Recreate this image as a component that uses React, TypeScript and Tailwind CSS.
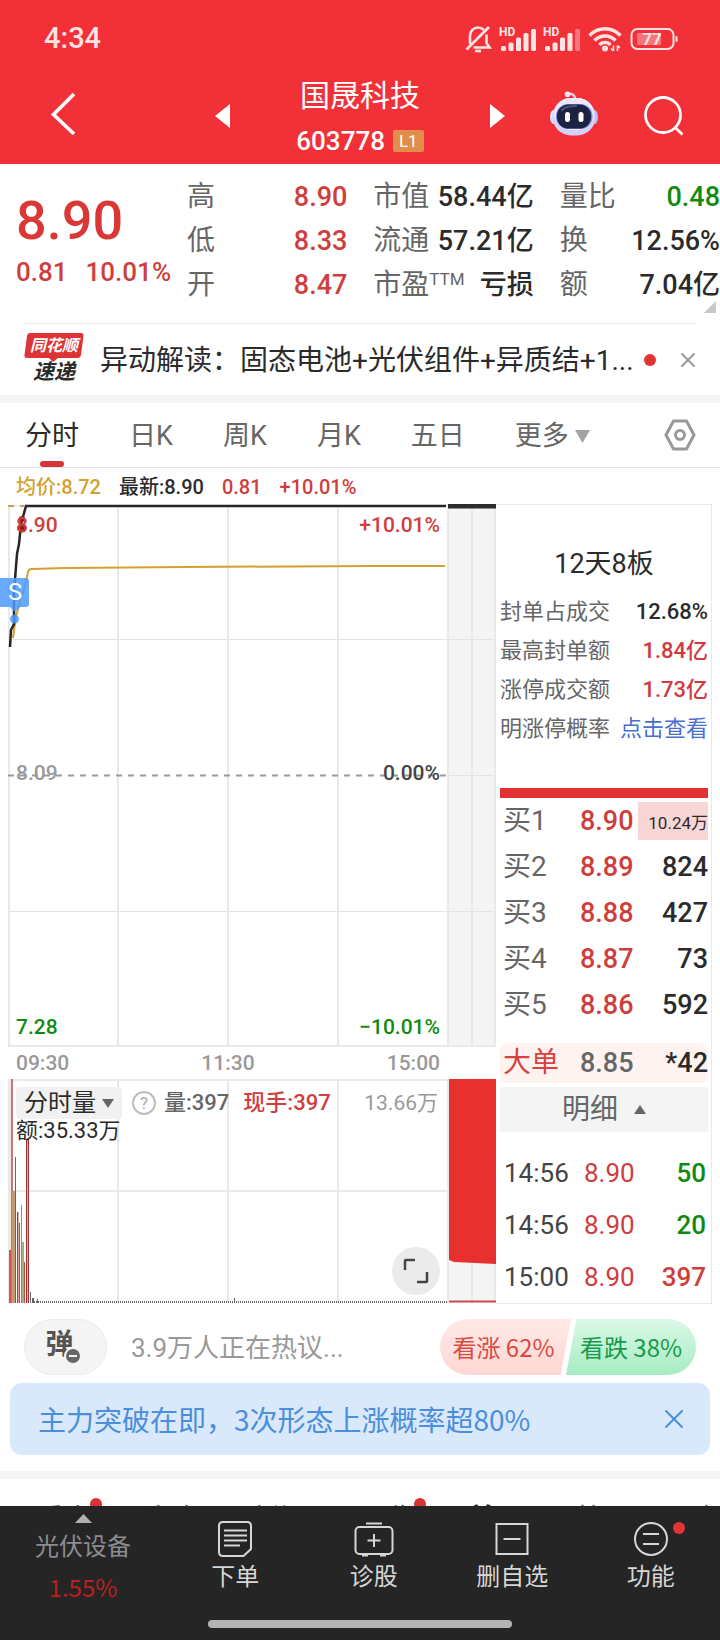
import { useState } from 'react'
import { X } from 'lucide-react'

const stats = [
  [
    { label: '高', value: '8.90', color: 'text-[#cf3d3c]' },
    { label: '低', value: '8.33', color: 'text-[#cf3d3c]' },
    { label: '开', value: '8.47', color: 'text-[#cf3d3c]' },
  ],
  [
    { label: '市值', value: '58.44亿', color: 'text-[#2b2b2b]' },
    { label: '流通', value: '57.21亿', color: 'text-[#2b2b2b]' },
    { label: '市盈', sup: 'TTM', value: '亏损', color: 'text-[#2b2b2b]' },
  ],
  [
    { label: '量比', value: '0.48', color: 'text-[#118a11]' },
    { label: '换', value: '12.56%', color: 'text-[#2b2b2b]' },
    { label: '额', value: '7.04亿', color: 'text-[#2b2b2b]' },
  ],
]

const periods = ['分时', '日K', '周K', '月K', '五日']

const bids = [
  { label: '买1', price: '8.90', volume: '10.24万' },
  { label: '买2', price: '8.89', volume: '824' },
  { label: '买3', price: '8.88', volume: '427' },
  { label: '买4', price: '8.87', volume: '73' },
  { label: '买5', price: '8.86', volume: '592' },
]

const trades = [
  { time: '14:56', price: '8.90', volume: '50', color: 'text-[#118a11]' },
  { time: '14:56', price: '8.90', volume: '20', color: 'text-[#118a11]' },
  { time: '15:00', price: '8.90', volume: '397', color: 'text-[#cf3d3c]' },
]

const limitInfo = [
  { label: '封单占成交', value: '12.68%', color: 'text-[#2b2b2b]' },
  { label: '最高封单额', value: '1.84亿', color: 'text-[#d0393f]' },
  { label: '涨停成交额', value: '1.73亿', color: 'text-[#d0393f]' },
]

// x, top, width, colour
const volumeBars: [number, number, number, string][] = [
  [1, 0, 3, '#f6e4e4'],
  [1, 171, 2, '#d9504f'],
  [3, 0, 2, '#c07a78'],
  [4, 112, 4, '#c29a72'],
  [7, 78, 1, '#a84a48'],
  [9, 133, 1, '#b03c3a'],
  [10, 133, 1, '#e2a5a3'],
  [11, 144, 1, '#d24341'],
  [13, 126, 1, '#dd6e6c'],
  [14, 163, 2, '#9bb27c'],
  [16, 183, 1, '#d24341'],
  [18, 60, 1, '#983230'],
  [19, 60, 1, '#e2a5a3'],
  [20, 60, 1, '#983230'],
  [22, 213, 1, '#666666'],
  [24, 219, 2, '#666666'],
  [29, 220, 1, '#666666'],
  [226, 219, 1, '#666666'],
]

const newsTabs = [
  { label: '看点', dot: true },
  { label: '资金', dot: false },
  { label: '新闻', dot: false },
  { label: '公告', dot: true },
  { label: '首页', dot: false, active: true },
  { label: '简况', dot: false },
  { label: '财务', dot: false },
]

function StatusBar() {
  return (
    <div className="flex h-[68px] items-center justify-between pt-2.5 pr-[42px] pl-11 text-[#ffe3e4]">
      <span className="text-[29px] font-medium">4:34</span>
      <div className="flex items-center gap-2">
        <svg width="27" height="28" viewBox="0 0 27 28" fill="none" stroke="currentColor" strokeWidth="2.6">
          <path d="M1.5 24.5 24 2" />
          <path d="M5 19V11c0-5 3.500-8.500 8-8.500 2.500 0 4.500 1 6 2.500M21.500 9.500V18l3 4.500H8.500" />
          <path d="M10 26h6" strokeWidth="2.600" />
        </svg>
        <Signal />
        <Signal weak />
        <svg width="34" height="26" viewBox="0 0 34 26" fill="none" stroke="currentColor" strokeWidth="3.400">
          <path d="M1.500 9.500c9-9 22-9 31 0" />
          <path d="M6.500 14.500c6-6 15-6 21 0" />
          <path d="M11.500 19c3-3.500 8-3.500 11 0" />
          <circle cx="17" cy="22.500" r="3" fill="currentColor" stroke="none" />
          <path d="M25.500 19.500v5.500m0 0-2.500-2.500M29.500 25v-5.500m0 0 2.500 2.500" strokeWidth="1.600" />
        </svg>
        <svg width="48" height="24" viewBox="0 0 48 24" fill="none">
          <rect x="1.500" y="2" width="42" height="20" rx="6" stroke="currentColor" strokeWidth="2" />
          <rect x="7" y="6" width="24" height="12" rx="1" fill="#f8747a" />
          <rect x="45.500" y="9" width="2" height="6" rx="1" fill="currentColor" />
          <text x="22" y="17.500" textAnchor="middle" fill="currentColor" fontSize="17" fontWeight="700">77</text>
        </svg>
      </div>
    </div>
  )
}

function Signal({ weak = false }: { weak?: boolean }) {
  return (
    <svg className="overflow-visible" width="36" height="25" viewBox="0 0 36 25" fill="currentColor">
      <text x="-1" y="9" fontSize="12" fontWeight="700">HD</text>
      <rect x="1" y="19" width="5" height="5" rx="1.500" />
      <rect x="8.500" y="15.500" width="5" height="8.500" rx="1.500" />
      <rect x="16" y="10.500" width="5" height="13.500" rx="1.500" />
      <rect x="23.500" y="6" width="5" height="18" rx="1.500" />
      <rect x="31" y="2" width="5" height="22" rx="1.500" opacity={weak ? 0.4 : 1} />
    </svg>
  )
}

function Robot() {
  return (
    <svg width="48" height="46" viewBox="0 0 48 46" fill="none">
      <path d="M17 3c5-1 8 1 8 5" stroke="#f3c9dc" strokeWidth="2.400" />
      <circle cx="17.500" cy="3.200" r="2.800" fill="#f6e6f2" />
      <ellipse cx="3.500" cy="26" rx="3.500" ry="7" fill="#dfe0fb" />
      <ellipse cx="44.500" cy="26" rx="3.500" ry="7" fill="#b9bdf0" />
      <rect x="2.500" y="7" width="43" height="37.500" rx="18.500" fill="#d5d2f7" />
      <rect x="4" y="7" width="40" height="32" rx="16" fill="#ece8fc" />
      <rect x="6" y="13" width="36.500" height="25" rx="12" fill="#7a86e0" />
      <rect x="7" y="13.500" width="34" height="24" rx="11.500" fill="#1b2340" />
      <path d="M12 19c3-3.500 8-4 14-4" stroke="#4c5578" strokeWidth="2" strokeLinecap="round" />
      <rect x="15" y="21" width="5" height="10" rx="2.500" fill="#fff" />
      <rect x="28.500" y="21" width="5" height="10" rx="2.500" fill="#fff" />
    </svg>
  )
}

function Header() {
  return (
    <header className="bg-[#f23038]">
      <StatusBar />
      <div className="grid h-24 grid-cols-[1fr_auto_1fr] items-center">
        <button aria-label="返回" className="mb-1 ml-[50px] w-fit">
          <svg width="26" height="44" viewBox="0 0 26 44" fill="none" stroke="#fff" strokeWidth="3.600">
            <path d="M24 2 3.500 22.500 24 42" />
          </svg>
        </button>
        <div className="flex w-[290px] items-center justify-between">
          <button aria-label="上一只">
            <svg width="15" height="24" viewBox="0 0 15 24" fill="#fff"><path d="M0 12 15 0v24z" /></svg>
          </button>
          <div className="pt-1 text-center text-white">
            <h1 className="text-[30px] leading-[46px]">国晟科技</h1>
            <p className="flex items-center justify-center gap-2 text-[26px] leading-[44px] font-medium">
              603778
              <span className="rounded-xs bg-[#df8f4b] px-1.5 text-[17px] leading-[22px] font-normal">L1</span>
            </p>
          </div>
          <button aria-label="下一只">
            <svg width="15" height="24" viewBox="0 0 15 24" fill="#fff"><path d="M15 12 0 0v24z" /></svg>
          </button>
        </div>
        <div className="flex items-center justify-end gap-[46px] pr-9">
          <button aria-label="助手" className="mb-1"><Robot /></button>
          <button aria-label="搜索">
            <svg width="40" height="40" viewBox="0 0 40 40" fill="none" stroke="#fff" strokeWidth="2.800">
              <circle cx="19" cy="19" r="17.500" />
              <path d="m30.500 31 8 7.500" />
            </svg>
          </button>
        </div>
      </div>
    </header>
  )
}

function Quote() {
  return (
    <section className="relative flex pt-[11px] pb-4 pl-4">
      <div className="w-[171px] pt-3 text-[#cf3d3c]">
        <p className="text-[54px] leading-[68px] font-medium text-[#d93837]">8.90</p>
        <p className="flex gap-[18px] text-[26px] leading-[34px] font-medium">
          <span>0.81</span>
          <span>10.01%</span>
        </p>
      </div>
      <div className="grid flex-1 grid-cols-3 gap-[26px]">
        {stats.map((column, i) => (
          <dl key={i}>
            {column.map((item) => (
              <div key={item.label} className="flex justify-between text-[28px] leading-[44px] whitespace-nowrap">
                <dt className="flex text-[#666]">
                  {item.label}
                  {item.sup && <sup className="top-0 text-[17px] leading-8">{item.sup}</sup>}
                </dt>
                <dd className={`text-[27px] font-medium ${item.color}`}>{item.value}</dd>
              </div>
            ))}
          </dl>
        ))}
      </div>
      <svg className="absolute right-1 bottom-2.5" width="12" height="12" viewBox="0 0 12 12" fill="#c8c8c8">
        <path d="M12 0v12H0z" />
      </svg>
    </section>
  )
}

function NewsFlash() {
  return (
    <section className="mx-6 flex h-[72px] items-center border-t border-[#e8e8e8]">
      <div className="relative w-[60px] pt-px font-bold italic">
        <svg className="absolute top-0 left-0" width="60" height="30" viewBox="0 0 60 30" fill="#dd3436">
          <path d="M6 0h51q3 0 2.500 3L57 22q-.500 3-3.500 3H34l-5 4-4-4H3q-3 0-2.500-3L3 3q.500-3 3-3z" />
        </svg>
        <p className="relative text-center text-[16px] leading-6 text-white">同花顺</p>
        <p className="text-center text-[21px] leading-7 text-[#2b2b2b]">速递</p>
      </div>
      <p className="ml-4 flex-1 truncate pt-0.5 text-[28px] leading-10 text-[#2b2b2b]">
        异动解读：固态电池+光伏组件+异质结+1...
      </p>
      <span className="size-3 rounded-full bg-[#e33434]" />
      <button aria-label="关闭" className="-mr-1 ml-5">
        <X size={24} strokeWidth={2} className="text-[#999]" />
      </button>
    </section>
  )
}

function PeriodTabs({ period, onChange }: { period: string; onChange: (p: string) => void }) {
  return (
    <nav className="flex h-[65px] items-center gap-[50px] border-b border-[#e3e3e3] pr-6 pl-[25px] text-[27px]">
      {periods.map((p) => (
        <button
          key={p}
          onClick={() => onChange(p)}
          className={`relative h-full pt-0.5 whitespace-nowrap ${p === period ? 'text-[#2b2b2b]' : 'text-[#666]'}`}
        >
          {p}
          {p === period && (
            <span className="absolute bottom-0 left-1/2 h-1.5 w-6 -translate-x-1/2 rounded-full bg-[#d93335]" />
          )}
        </button>
      ))}
      <button className="flex items-center gap-1.5 pt-0.5 whitespace-nowrap text-[#666]">
        更多
        <svg width="15" height="13" viewBox="0 0 15 13" fill="#a3a3a3"><path d="M0 0h15L7.500 13z" /></svg>
      </button>
      <button aria-label="设置" className="ml-auto">
        <svg width="32" height="32" viewBox="0 0 32 32" fill="none" stroke="#999" strokeWidth="3">
          <path d="M9.500 2h13L30 16l-7.500 14h-13L2 16z" strokeLinejoin="round" />
          <circle cx="16" cy="16" r="4.500" />
        </svg>
      </button>
    </nav>
  )
}

function PriceChart() {
  return (
    <div className="relative h-[543px] text-[21px] leading-6 font-medium">
      <svg className="block size-full" viewBox="0 0 488 543" preserveAspectRatio="none" fill="none">
        <rect x="440" y="0" width="48" height="543" fill="#f4f4f4" />
        <path d="M.500 2H440M0 135.500h488M0 407.500h488M440 271.500h48" stroke="#e3e3e3" />
        <path d="M1 2v541M110 2v541M220 2v541M330 2v541M440 2v541M464 2v541M487 2v541M0 542h488" stroke="#e9e9e9" strokeWidth="2" />
        <path d="M0 271.500h440" stroke="#999" strokeWidth="2" strokeDasharray="6 6" />
        <path d="M0 2h16" stroke="#c9a257" strokeWidth="2" strokeDasharray="6 6" />
        <path d="M5 134 8 112l9-30 3-14q1-3 3-3l35-1 120-1 184-1 75 0" stroke="#d3a12f" strokeWidth="2" />
        <path d="m2 143 1-17 3-6V88l3-38 2-10 2-20 5-18h420" stroke="#262626" strokeWidth="2.500" />
        <circle cx="14" cy="15" r="3" fill="#8c2222" />
        <circle cx="14" cy="24" r="4.500" fill="#8c2222" />
        <rect x="440" y="0" width="48" height="4.500" fill="#2d2d2d" />
      </svg>
      <span className="absolute top-[9px] left-2 text-[#cf3d3c]">8.90</span>
      <span className="absolute top-[9px] right-14 text-[#cf3d3c]">+10.01%</span>
      <span className="absolute top-[257px] left-2 text-[#999]">8.09</span>
      <span className="absolute top-[257px] right-14 text-[#444]">0.00%</span>
      <span className="absolute bottom-2 left-2 text-[#118a11]">7.28</span>
      <span className="absolute right-14 bottom-2 text-[#118a11]">−10.01%</span>
      <div className="absolute top-[74px] -left-2">
        <svg width="30" height="48" viewBox="0 0 30 48" fill="#4c9bff" fillOpacity="0.850">
          <path d="M0 0h26q3 0 3 3v23q0 3-3 3h-6l-5 5-5-5H0z" />
          <circle cx="14.500" cy="41" r="4.500" />
        </svg>
        <span className="absolute top-0.5 left-2 text-[24px] leading-6 font-normal text-white">S</span>
      </div>
    </div>
  )
}

function VolumeChart() {
  return (
    <div className="relative h-[224px] text-[22px] leading-[26px]">
      <svg className="block size-full" viewBox="0 0 488 224" preserveAspectRatio="none" fill="none">
        <rect x="440" y="0" width="48" height="224" fill="#f4f4f4" />
        <path d="M0 1h440M0 112h440M1 0v224M110 0v224M220 0v224M330 0v224M440 0v224M464 0v224M487 0v224" stroke="#e9e9e9" strokeWidth="2" />
        {volumeBars.map(([x, top, width, color], i) => (
          <rect key={i} x={x} y={top} width={width} height={224 - top} fill={color} />
        ))}
        <path d="M22 223h418" stroke="#666" strokeWidth="2" strokeDasharray="1 1" />
        <path d="M441 0h47v185l-42-2-5-2z" fill="#e83030" />
        <path d="M441 222.500h47" stroke="#c94a4a" strokeWidth="2" />
      </svg>
      <div className="absolute inset-x-0 top-2 flex items-center pr-[58px] pl-2">
        <button className="flex h-8 items-center gap-1.5 rounded-sm bg-[#f1f1f1] px-2 text-[24px] text-[#2b2b2b]">
          分时量
          <svg width="12" height="9" viewBox="0 0 12 9" fill="#666"><path d="M0 0h12L6 9z" /></svg>
        </button>
        <button aria-label="说明" className="ml-2.5 size-6 rounded-full border-2 border-[#bdbdbd] text-[17px] leading-5 text-[#aaa]">?</button>
        <span className="ml-2 font-medium text-[#666]">量:397</span>
        <span className="ml-3.5 font-medium text-[#cf3d3c]">现手:397</span>
        <span className="ml-auto text-[21px] text-[#999]">13.66万</span>
      </div>
      <span className="absolute top-[39px] left-2 text-[#2b2b2b]">额:35.33万</span>
      <button aria-label="全屏" className="absolute right-14 bottom-2 flex size-12 items-center justify-center rounded-full bg-[#ebebeb]">
        <svg width="26" height="26" viewBox="0 0 26 26" fill="none" stroke="#444" strokeWidth="2.500">
          <path d="M2 12V3q0-1 1-1h9M14 24h9q1 0 1-1v-9" />
        </svg>
      </button>
    </div>
  )
}

function OrderBook() {
  return (
    <aside className="flex flex-col border-t border-r border-b border-[#e8e8e8] pr-[3px] pl-1">
      <h2 className="mt-[41px] text-center text-[27px] leading-9 text-[#2b2b2b]">12天8板</h2>
      <dl className="mt-2.5 text-[22px] leading-[39px] whitespace-nowrap">
        {limitInfo.map((item) => (
          <div key={item.label} className="flex justify-between">
            <dt className="text-[#666]">{item.label}</dt>
            <dd className={`font-medium ${item.color}`}>{item.value}</dd>
          </div>
        ))}
        <div className="flex justify-between">
          <dt className="text-[#666]">明涨停概率</dt>
          <dd><a href="#" className="text-[#4a6fd0]">点击查看</a></dd>
        </div>
      </dl>
      <div className="mt-10 h-2.5 bg-[#e33030]" />
      <table className="w-full text-[27px] leading-[46px]">
        <tbody>
          {bids.map((bid, i) => (
            <tr key={bid.label} className="h-[46px]">
              <td className="w-20 pl-[3px] text-[28px] text-[#666]">{bid.label}</td>
              <td className="w-[58px] font-medium text-[#cf3d3c]">{bid.price}</td>
              {i === 0 ? (
                <td><span className="block bg-[#f9d6d6] pt-1 text-right text-[17px] leading-[34px] text-[#2b2b2b]">{bid.volume}</span></td>
              ) : (
                <td className="text-right font-medium text-[#2b2b2b]">{bid.volume}</td>
              )}
            </tr>
          ))}
        </tbody>
      </table>
      <div className="mt-[15px] flex h-10 items-center rounded-lg bg-[#fff3f2] text-[27px] font-medium">
        <span className="w-20 pl-[3px] text-[28px] font-normal text-[#d8423e]">大单</span>
        <span className="text-[#666]">8.85</span>
        <span className="ml-auto text-[#2b2b2b]">*42</span>
      </div>
      <button className="mt-1 flex h-[45px] items-center justify-center gap-4 bg-[#f4f4f4] text-[28px] text-[#666]">
        明细
        <svg width="12" height="9" viewBox="0 0 12 9" fill="#666"><path d="M0 9h12L6 0z" /></svg>
      </button>
      <table className="mt-[15px] w-full text-[26px] leading-[52px]">
        <tbody>
          {trades.map((trade, i) => (
            <tr key={i}>
              <td className="w-[84px] pl-1 text-[#444]">{trade.time}</td>
              <td className="text-[#cf3d3c]">{trade.price}</td>
              <td className={`pr-0.5 text-right font-medium ${trade.color}`}>{trade.volume}</td>
            </tr>
          ))}
        </tbody>
      </table>
    </aside>
  )
}

function Discussion() {
  return (
    <section className="flex h-14 items-center px-6">
      <button aria-label="弹幕" className="flex h-14 w-[83px] items-center justify-center rounded-full border border-[#ececec] bg-[#f4f4f4]">
        <span className="relative right-1.5 bottom-0.5 text-[28px] leading-8 font-bold text-[#555]">
          弹
          <svg className="absolute -right-2 -bottom-1" width="18" height="18" viewBox="0 0 18 18">
            <circle cx="9" cy="9" r="8" fill="#666" stroke="#f4f4f4" strokeWidth="2" />
            <path d="M5 9h8" stroke="#f4f4f4" strokeWidth="2" />
          </svg>
        </span>
      </button>
      <input
        aria-label="评论"
        placeholder="3.9万人正在热议..."
        className="ml-6 min-w-0 flex-1 pt-0.5 text-[26px] leading-9 outline-none placeholder:text-[#999]"
      />
      <div className="flex h-14 font-['Noto_Sans_CJK_SC',sans-serif] text-[24px] whitespace-nowrap">
        <button className="w-[131px] rounded-l-full bg-gradient-to-b from-[#ffe9e7] to-[#fdd7d4] pr-1 text-[#d94b43] [clip-path:polygon(0_0,100%_0,92%_100%,0_100%)]">
          看涨 62%
        </button>
        <button className="-ml-[5px] w-[130px] rounded-r-full bg-gradient-to-b from-[#dcf8e7] to-[#a5ecc2] text-[#179a4b] [clip-path:polygon(8%_0,100%_0,100%_100%,0_100%)]">
          看跌 38%
        </button>
      </div>
    </section>
  )
}

function BottomNav() {
  return (
    <nav className="bg-[#252525] pt-2 pb-3 text-[24px] leading-8 text-[#d6d6d6]">
      <div className="grid h-[106px] grid-cols-[166px_repeat(4,1fr)]">
        <button className="flex flex-col items-center text-[#8c8c90]">
          <svg width="17" height="9" viewBox="0 0 17 9" fill="#b0b0b0"><path d="M0 9h17L8.500 0z" /></svg>
          <span className="mt-2">光伏设备</span>
          <span className="mt-2 font-['Noto_Sans_CJK_SC',sans-serif] text-[#bb1f1f]">1.55%</span>
        </button>
        <button className="flex flex-col items-center pt-[7px]">
          <svg width="34" height="36" viewBox="0 0 34 36" fill="none" stroke="currentColor" strokeWidth="2">
            <path d="M5 1h24q4 0 4 4v23l-7.500 7H5q-4 0-4-4V5q0-4 4-4z" />
            <path d="M6 9.500h23M6 14.500h23M6 19.500h23M6 24.500h16" />
          </svg>
          <span className="mt-1">下单</span>
        </button>
        <button className="flex flex-col items-center pt-[7px]">
          <svg width="40" height="36" viewBox="0 0 40 36" fill="none" stroke="currentColor" strokeWidth="2">
            <path d="M12 2.500h16" />
            <rect x="1.500" y="6" width="37" height="27" rx="4" />
            <path d="M20 13v13M13.500 19.500h13M8 34.500h6M26 34.500h6" />
          </svg>
          <span className="mt-1">诊股</span>
        </button>
        <button className="flex flex-col items-center pt-[7px]">
          <svg width="34" height="36" viewBox="0 0 34 36" fill="none" stroke="currentColor" strokeWidth="2">
            <rect x="1.500" y="3" width="31" height="30" />
            <path d="M8.500 18h17" />
          </svg>
          <span className="mt-1">删自选</span>
        </button>
        <button className="flex flex-col items-center pt-[7px]">
          <span className="relative">
            <svg width="34" height="36" viewBox="0 0 34 36" fill="none" stroke="currentColor" strokeWidth="2">
              <circle cx="17" cy="18" r="16" />
              <path d="M9 13h16M9 23h16" />
            </svg>
            <span className="absolute top-px -right-[17px] size-3 rounded-full bg-[#e33434]" />
          </span>
          <span className="mt-1">功能</span>
        </button>
      </div>
      <div className="mx-auto h-2 w-[304px] rounded-full bg-[#b3b3b3]" />
    </nav>
  )
}

export default function App() {
  const [period, setPeriod] = useState('分时')
  const [showTip, setShowTip] = useState(true)

  return (
    <div className="flex h-screen flex-col bg-white font-[Roboto,'Noto_Sans_CJK_SC',sans-serif]">
      <Header />
      <main className="min-h-0 flex-1 overflow-hidden">
        <Quote />
        <NewsFlash />
        <div className="h-2 bg-[#f4f4f4]" />
        <PeriodTabs period={period} onChange={setPeriod} />

        {/* Average / latest price */}
        <p className="flex h-9 items-center gap-[18px] pt-0.5 pl-4 text-[20px] font-medium">
          <span className="text-[#d3a12f]">均价:8.72</span>
          <span className="text-[#2b2b2b]">最新:8.90</span>
          <span className="text-[#cf3d3c]">0.81</span>
          <span className="text-[#cf3d3c]">+10.01%</span>
        </p>

        <div className="grid grid-cols-[1fr_216px] px-2">
          <div>
            <PriceChart />
            <div className="flex h-8 items-center justify-between pt-0.5 pr-14 pl-2 text-[21px] font-medium text-[#999]">
              <span>09:30</span>
              <span>11:30</span>
              <span>15:00</span>
            </div>
            <VolumeChart />
          </div>
          <OrderBook />
        </div>

        <div className="mt-[15px]">
          <Discussion />
        </div>

        {showTip && (
          <div className="mx-2.5 mt-2 flex h-[72px] items-center justify-between rounded-xl bg-[#dae8fb] pr-5 pl-7 font-['Noto_Sans_CJK_SC',sans-serif] text-[#4a8fdb]">
            <p className="truncate text-[28px] leading-10">主力突破在即，3次形态上涨概率超80%</p>
            <button aria-label="关闭提示" onClick={() => setShowTip(false)}>
              <X size={32} strokeWidth={1.500} />
            </button>
          </div>
        )}

        <div className="mt-4 h-2 bg-[#f4f4f4]" />
        <div className="flex gap-[52px] pt-[21px] pl-9 text-[28px] leading-10 whitespace-nowrap text-[#666]">
          {newsTabs.map((tab) => (
            <a key={tab.label} href="#" className={`relative ${tab.active ? 'font-bold text-[#2b2b2b]' : ''}`}>
              {tab.label}
              {tab.dot && <span className="absolute -top-0.5 -right-2.5 size-3 rounded-full bg-[#d93335]" />}
            </a>
          ))}
        </div>
      </main>
      <BottomNav />
    </div>
  )
}
